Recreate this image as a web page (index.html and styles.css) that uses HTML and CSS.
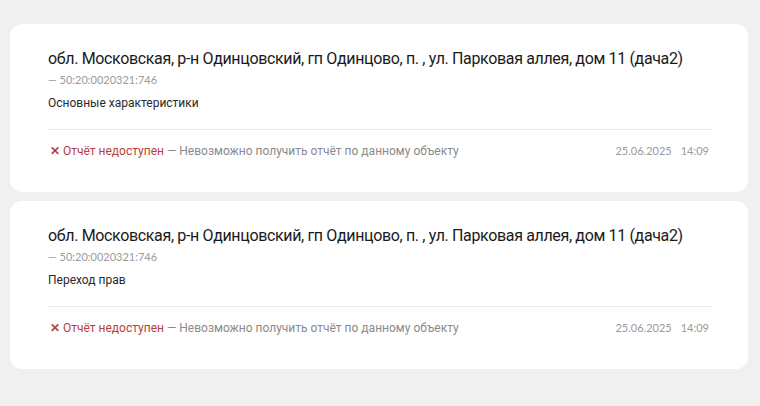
FILE: index.html
```html
<!DOCTYPE html>
<html lang="ru">
<head>
<meta charset="utf-8">
<link rel="stylesheet" href="styles.css">
</head>
<body>
<main class="list">
  <article class="card">
    <h2 class="title">обл. Московская, р-н Одинцовский, гп Одинцово, п. , ул. Парковая аллея, дом 11 (дача2)</h2>
    <div class="cad">— 50:20:0020321:746</div>
    <div class="kind">Основные характеристики</div>
    <div class="footer">
      <div class="status"><span class="err"><span class="x">✕</span> Отчёт недоступен</span> — Невозможно получить отчёт по данному объекту</div>
      <div class="when"><span>25.06.2025</span><span>14:09</span></div>
    </div>
  </article>
  <article class="card">
    <h2 class="title">обл. Московская, р-н Одинцовский, гп Одинцово, п. , ул. Парковая аллея, дом 11 (дача2)</h2>
    <div class="cad">— 50:20:0020321:746</div>
    <div class="kind">Переход прав</div>
    <div class="footer">
      <div class="status"><span class="err"><span class="x">✕</span> Отчёт недоступен</span> — Невозможно получить отчёт по данному объекту</div>
      <div class="when"><span>25.06.2025</span><span>14:09</span></div>
    </div>
  </article>
</main>
</body>
</html>
```
FILE: styles.css
```css
* { box-sizing: border-box; }
html, body { margin: 0; }
body {
  background: #f0f0f0;
  font-family: Roboto, "Noto Sans", sans-serif;
  color: #222;
  width: 760px;
  height: 406px;
  overflow: hidden;
}
.list {
  display: flex;
  flex-direction: column;
  gap: 9px;
  padding: 24px 12px 0 10px;
}
.card {
  background: #fff;
  border-radius: 12px;
  height: 168px;
  padding: 24px 36px 0 38px;
  display: flex;
  flex-direction: column;
}
.title {
  margin: 0;
  font-size: 16px;
  font-weight: 400;
  letter-spacing: -0.35px;
  line-height: 22px;
  color: #1a1a1a;
  white-space: nowrap;
}
.cad {
  margin-top: 2px;
  font-family: Lato, sans-serif;
  font-size: 11px;
  line-height: 16px;
  color: #9a9a9a;
}
.kind {
  margin-top: 6px;
  font-size: 12px;
  line-height: 18px;
  color: #2a2a2a;
}
.footer {
  margin-top: 17px;
  border-top: 1px solid #ececec;
  padding-top: 12px;
  display: flex;
  justify-content: space-between;
  align-items: center;
  line-height: 18px;
  font-size: 12px;
}
.status { color: #8a8a8a; padding-left: 2px; }
.err { color: #b5413c; }
.x { font-size: 11.5px; font-weight: 700; }
.when {
  display: flex;
  gap: 9px;
  font-family: Lato, sans-serif;
  font-size: 11px;
  color: #9a9a9a;
  padding-right: 3px;
}
```
